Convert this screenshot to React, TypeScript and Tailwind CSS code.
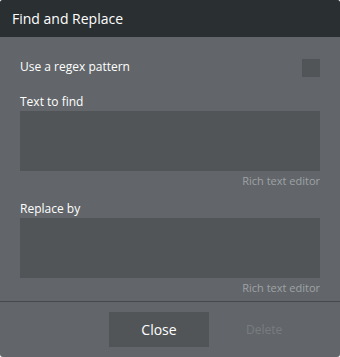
import React from "react";

export default function App() {
  return (
    <div className="w-[340px] h-[357px] bg-white" style={{ fontFamily: '"Open Sans", "Noto Sans", sans-serif' }}>
      <div className="w-[340px] h-[357px] rounded-[3px] overflow-hidden bg-[#62666a] flex flex-col">
        <div className="h-[37px] bg-[#2a2f32] flex items-center px-3 shrink-0">
          <span className="text-[14px] text-white leading-none">Find and Replace</span>
        </div>
        <div className="px-5 flex flex-col">
          <div className="flex items-center justify-between h-[18px] mt-[22px]">
            <span className="text-[12px] text-white leading-none mb-[2px]">Use a regex pattern</span>
            <div className="w-[18px] h-[18px] bg-[#515558]" />
          </div>
          <div className="text-[12px] text-white leading-none mt-[18px] h-[15px] pt-[1px]">Text to find</div>
          <div className="h-[60px] bg-[#515558] mt-[1px]" />
          <div className="text-[11px] text-[#9ea2a5] text-right leading-none mt-[4px] h-[11px]">Rich text editor</div>
          <div className="text-[12px] text-white leading-none mt-[16px] h-[15px] pt-[1px]">Replace by</div>
          <div className="h-[60px] bg-[#515558] mt-[1px]" />
          <div className="text-[11px] text-[#9ea2a5] text-right leading-none mt-[4px] h-[11px]">Rich text editor</div>
        </div>
        <div className="h-px bg-[#45494c] mt-[8px]" />
        <div className="flex items-center h-[35px] mt-[10px]">
          <div className="ml-[109px] w-[100px] h-[35px] bg-[#515558] flex items-center justify-center text-[14px] text-white">Close</div>
          <div className="ml-[37px] text-[12px] text-[#787c80]">Delete</div>
        </div>
      </div>
    </div>
  );
}
